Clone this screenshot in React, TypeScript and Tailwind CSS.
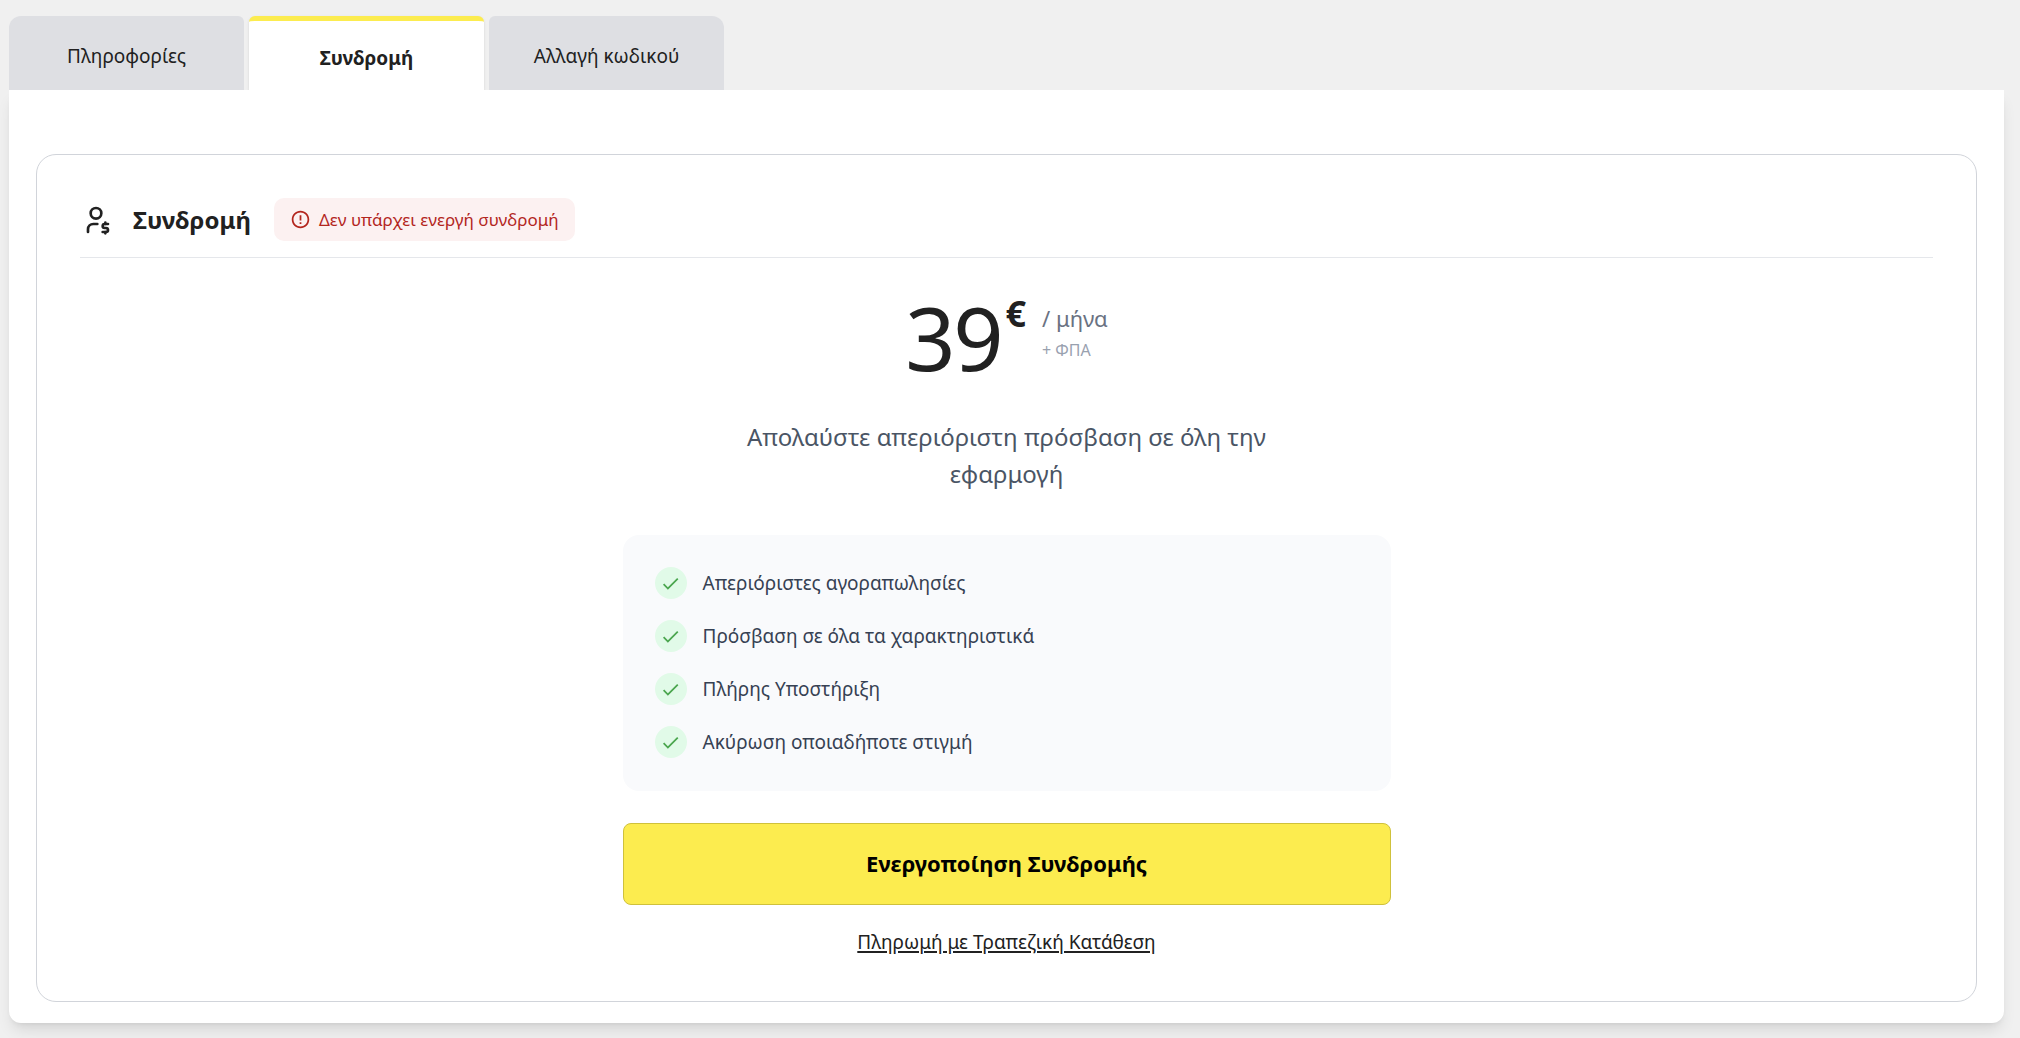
import { useState } from "react";
import { MdCheck, MdErrorOutline } from "react-icons/md";
import { TbUserDollar } from "react-icons/tb";

const TABS = ["Πληροφορίες", "Συνδρομή", "Αλλαγή κωδικού"];

const FEATURES = [
    "Απεριόριστες αγοραπωλησίες",
    "Πρόσβαση σε όλα τα χαρακτηριστικά",
    "Πλήρης Υποστήριξη",
    "Ακύρωση οποιαδήποτε στιγμή",
];

function TabButton({ label, active, onClick }: { label: string; active: boolean; onClick: () => void }) {
    return (
        <button
            type="button"
            role="tab"
            aria-selected={active}
            onClick={onClick}
            className={`h-[74px] w-[235px] rounded-t-md pt-1.5 text-[19px] first:rounded-tl-xl last:rounded-tr-xl ${active ? "border-t-[5px] border-[#fcec4f] bg-white font-bold shadow-sm" : "bg-[#dedfe3]"}`}
        >
            {label}
        </button>
    );
}

function Price() {
    return (
        <div className="flex items-start justify-center">
            <span className="text-[88px] leading-[86px] tracking-tight">39</span>
            <span className="ml-1 text-4xl font-bold">€</span>
            <div className="ml-4 flex flex-col pt-2">
                <span className="text-[22px] leading-8 text-gray-500">/ μήνα</span>
                <span className="text-base leading-8 text-gray-400">+ ΦΠΑ</span>
            </div>
        </div>
    );
}

export default function App() {
    const [tab, setTab] = useState(1);

    return (
        <div className="min-h-screen bg-[#f0f0f0] pt-4 pr-4 pb-4 pl-[9px] font-['Noto_Sans',sans-serif] text-[#212121]">
            <div role="tablist" className="flex gap-[5px]">
                {TABS.map((label, i) => (
                    <TabButton key={label} label={label} active={i === tab} onClick={() => setTab(i)} />
                ))}
            </div>

            <main className="relative rounded-b-xl bg-white px-[27px] pt-16 pb-[21px] shadow-lg">
                <section className="rounded-[20px] border border-[#d1d4da] px-[43px] pt-[43px] pb-[45px]">
                    <header className="flex items-center border-b border-gray-200 pb-4">
                        <TbUserDollar size={32} />
                        <h1 className="ml-[21px] text-2xl font-bold">{TABS[1]}</h1>
                        <div className="ml-[23px] flex h-[43px] items-center gap-2 rounded-[10px] bg-[#fcf1f1] px-4 text-[17px] text-[#b3261e]">
                            <MdErrorOutline size={21} />
                            {"Δεν υπάρχει ενεργή συνδρομή"}
                        </div>
                    </header>

                    <div className="mx-auto flex max-w-3xl flex-col items-stretch pt-9">
                        <Price />
                        <p className="mx-auto mt-[38px] max-w-[576px] text-center text-2xl leading-[37px] text-gray-600">
                            Απολαύστε απεριόριστη πρόσβαση σε όλη την εφαρμογή
                        </p>

                        <ul className="mt-[43px] flex flex-col gap-[21px] rounded-2xl bg-[#f9fafc] px-8 pt-8 pb-[33px]">
                            {FEATURES.map((f) => (
                                <li key={f} className="flex items-center gap-4 text-[19px] leading-8 text-gray-700">
                                    <span className="flex size-8 items-center justify-center rounded-full bg-[#e1fae8] text-[#4ba64f]">
                                        <MdCheck size={21} />
                                    </span>
                                    {f}
                                </li>
                            ))}
                        </ul>

                        <button type="button" className="mt-8 h-[82px] rounded-lg border border-[#cfc13c] bg-[#fcec4f] pb-0.5 text-[22px] font-bold text-black">
                            Ενεργοποίηση Συνδρομής
                        </button>
                        <a href="#" className="mx-auto mt-[23px] text-[19px] leading-7 underline decoration-2 underline-offset-2">
                            Πληρωμή με Τραπεζική Κατάθεση
                        </a>
                    </div>
                </section>
            </main>
        </div>
    );
}
